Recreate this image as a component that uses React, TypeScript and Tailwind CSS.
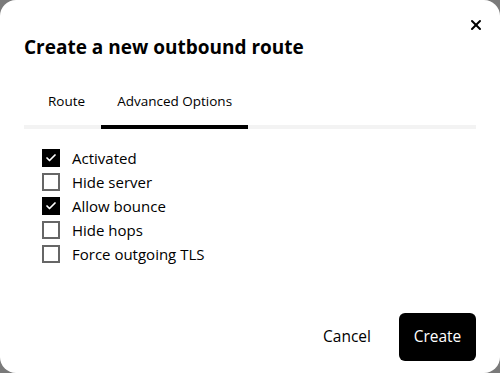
import { X, Check } from "lucide-react";

const options = [
  { label: "Activated", checked: true },
  { label: "Hide server", checked: false },
  { label: "Allow bounce", checked: true },
  { label: "Hide hops", checked: false },
  { label: "Force outgoing TLS", checked: false },
];

export default function App() {
  return (
    <div className="h-[373px] w-[500px] bg-[#7a7a7a] font-['Open_Sans',sans-serif] text-black">
      <div className="relative flex h-full w-full flex-col rounded-[16px] bg-white px-6">
        <button className="absolute right-[14px] top-[15px] p-0.5">
          <X size={16} strokeWidth={3} />
        </button>

        <h2 className="mt-[33px] text-[19px] font-bold leading-[28px]">Create a new outbound route</h2>

        {/* Tabs */}
        <div className="mt-[25px] flex border-b-4 border-[#f3f3f3]">
          <div className="pb-[14px] pl-6 pr-4 pt-[5px] text-[13.5px]">Route</div>
          <div className="-mb-1 border-b-4 border-black px-4 pb-[14px] pt-[5px] text-[13.5px]">Advanced Options</div>
        </div>

        <div className="mt-5 flex flex-col gap-1.5 pl-[18px]">
          {options.map((o) => (
            <label key={o.label} className="flex h-[18px] items-center gap-3 text-[15px]">
              {o.checked ? (
                <span className="flex h-[18px] w-[18px] items-center justify-center bg-black">
                  <Check size={12} strokeWidth={3.5} className="text-white" />
                </span>
              ) : (
                <span className="h-[18px] w-[18px] border-2 border-[#666]" />
              )}
              {o.label}
            </label>
          ))}
        </div>

        <div className="mt-auto mb-3 flex items-center justify-end gap-2">
          <button className="h-12 pl-6 pr-5 text-[15.5px]">Cancel</button>
          <button className="h-12 w-[77px] rounded-md bg-black text-[15.5px] text-white">Create</button>
        </div>
      </div>
    </div>
  );
}
